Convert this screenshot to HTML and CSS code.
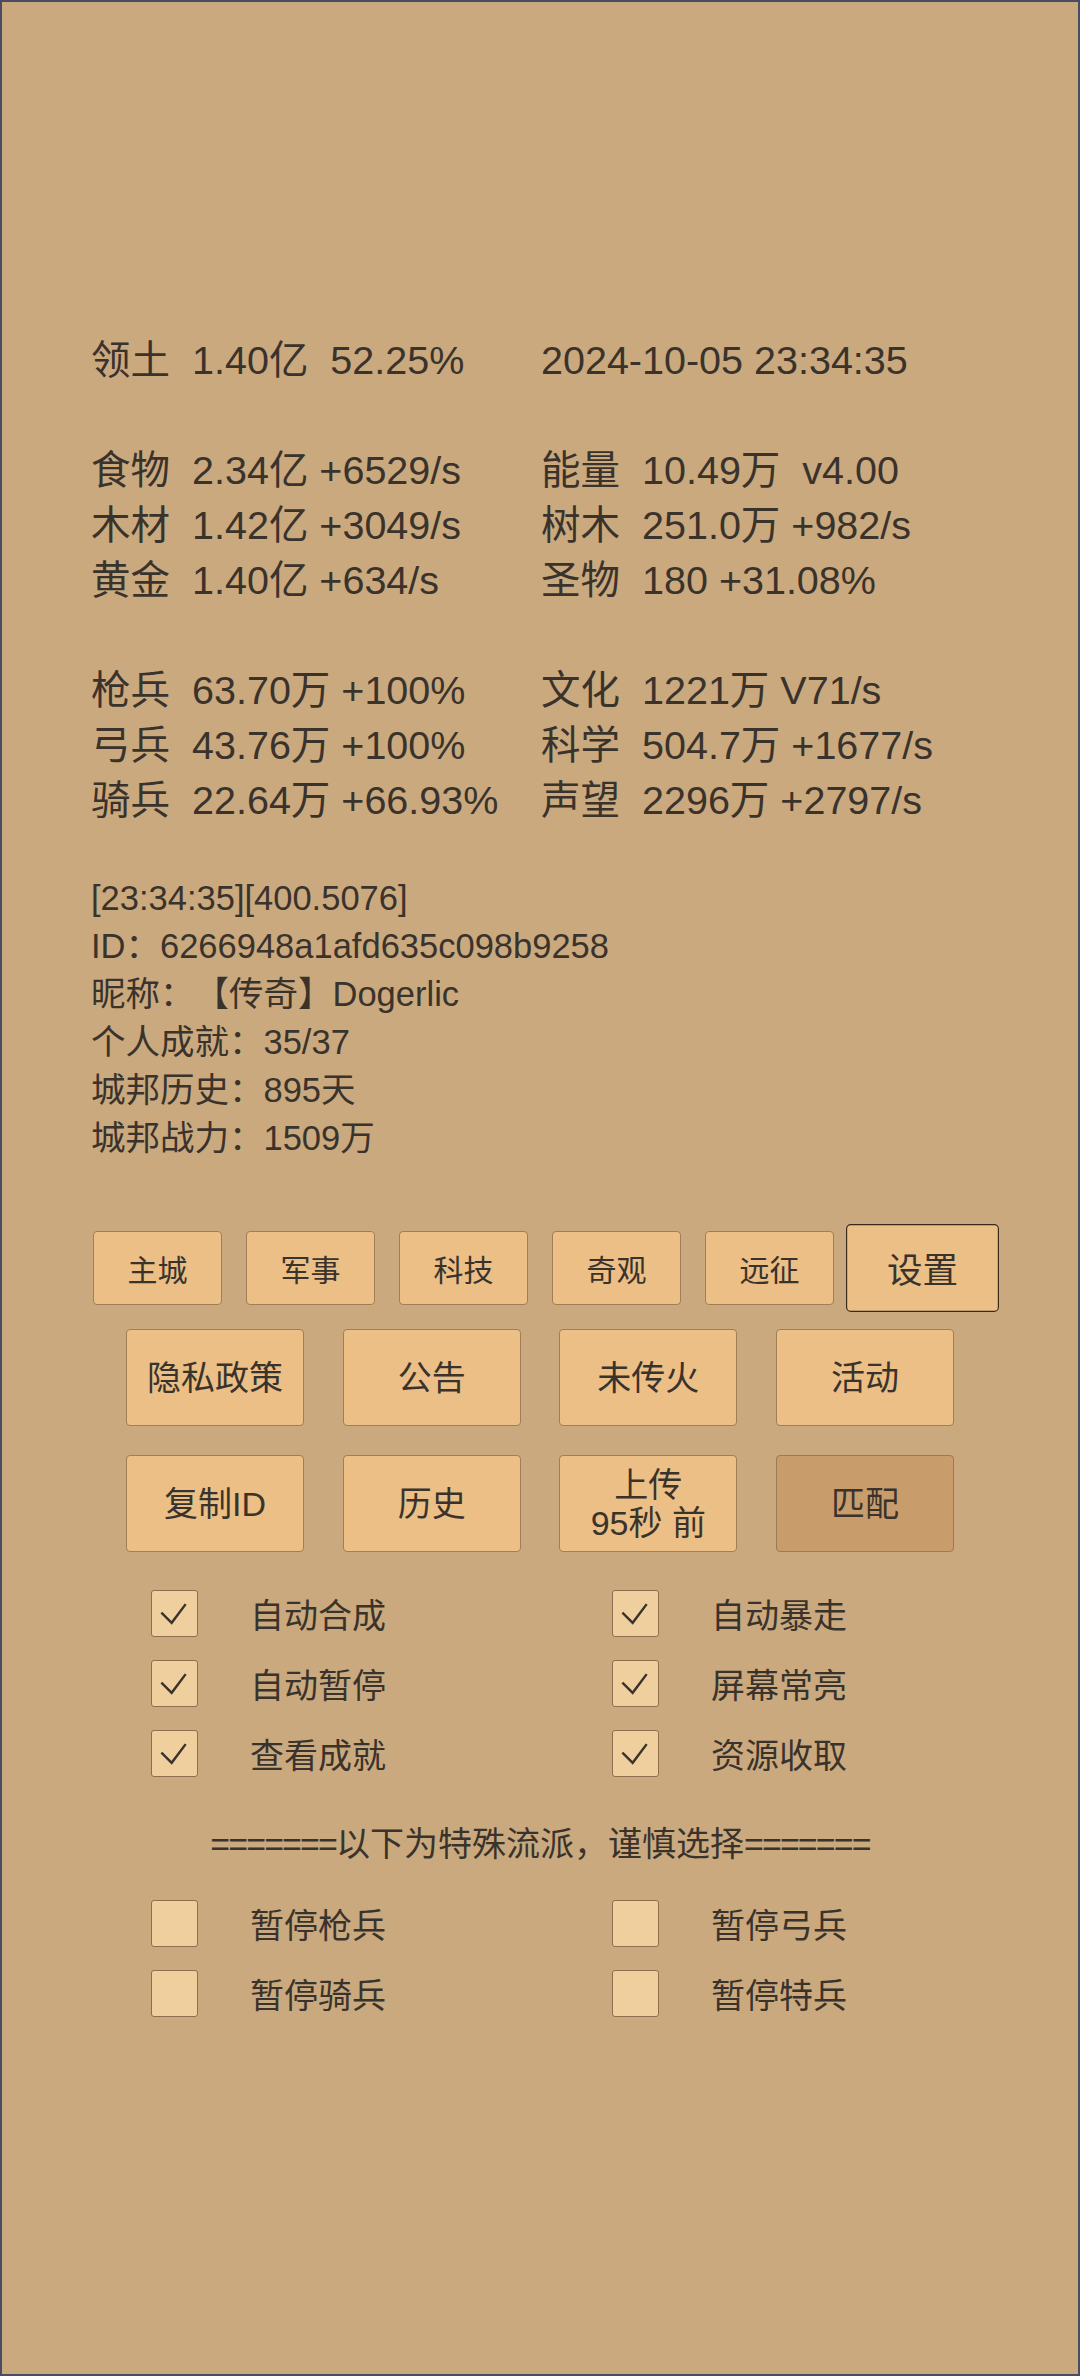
FILE: index.html
```html
<!DOCTYPE html>
<html lang="zh-CN">
<head>
    <meta charset="UTF-8">
    <meta name="viewport" content="width=device-width, initial-scale=1.0">
    <title>城邦</title>
    <link rel="stylesheet" href="styles.css">
</head>
<body>
    <div class="frame">
        <div class="stats">
            <div class="stat"><span class="label">领土</span>1.40亿  52.25%</div>
            <div class="stat">2024-10-05 23:34:35</div>
            <div class="blank"></div>
            <div class="blank"></div>
            <div class="stat"><span class="label">食物</span>2.34亿 +6529/s</div>
            <div class="stat"><span class="label">能量</span>10.49万  v4.00</div>
            <div class="stat"><span class="label">木材</span>1.42亿 +3049/s</div>
            <div class="stat"><span class="label">树木</span>251.0万 +982/s</div>
            <div class="stat"><span class="label">黄金</span>1.40亿 +634/s</div>
            <div class="stat"><span class="label">圣物</span>180 +31.08%</div>
            <div class="blank"></div>
            <div class="blank"></div>
            <div class="stat"><span class="label">枪兵</span>63.70万 +100%</div>
            <div class="stat"><span class="label">文化</span>1221万 V71/s</div>
            <div class="stat"><span class="label">弓兵</span>43.76万 +100%</div>
            <div class="stat"><span class="label">科学</span>504.7万 +1677/s</div>
            <div class="stat"><span class="label">骑兵</span>22.64万 +66.93%</div>
            <div class="stat"><span class="label">声望</span>2296万 +2797/s</div>
        </div>

        <div class="info">
            <div>[23:34:35][400.5076]</div>
            <div>ID：6266948a1afd635c098b9258</div>
            <div>昵称：【传奇】Dogerlic</div>
            <div>个人成就：35/37</div>
            <div>城邦历史：895天</div>
            <div>城邦战力：1509万</div>
        </div>

        <div class="tabs">
            <button class="tab">主城</button>
            <button class="tab">军事</button>
            <button class="tab">科技</button>
            <button class="tab">奇观</button>
            <button class="tab">远征</button>
            <button class="tab active">设置</button>
        </div>

        <div class="actions">
            <button class="action">隐私政策</button>
            <button class="action">公告</button>
            <button class="action">未传火</button>
            <button class="action">活动</button>
        </div>
        <div class="actions second">
            <button class="action">复制ID</button>
            <button class="action">历史</button>
            <button class="action small-lines">上传<br>95秒 前</button>
            <button class="action pressed">匹配</button>
        </div>

        <div class="options">
            <label class="option"><span class="box"><svg viewBox="0 0 47 47"><path d="M10 23 L21 34 L36 14"/></svg></span>自动合成</label>
            <label class="option"><span class="box"><svg viewBox="0 0 47 47"><path d="M10 23 L21 34 L36 14"/></svg></span>自动暴走</label>
            <label class="option"><span class="box"><svg viewBox="0 0 47 47"><path d="M10 23 L21 34 L36 14"/></svg></span>自动暂停</label>
            <label class="option"><span class="box"><svg viewBox="0 0 47 47"><path d="M10 23 L21 34 L36 14"/></svg></span>屏幕常亮</label>
            <label class="option"><span class="box"><svg viewBox="0 0 47 47"><path d="M10 23 L21 34 L36 14"/></svg></span>查看成就</label>
            <label class="option"><span class="box"><svg viewBox="0 0 47 47"><path d="M10 23 L21 34 L36 14"/></svg></span>资源收取</label>
        </div>

        <div class="divider"><span class="rule">=======</span>以下为特殊流派，谨慎选择<span class="rule">=======</span></div>

        <div class="options">
            <label class="option"><span class="box"></span>暂停枪兵</label>
            <label class="option"><span class="box"></span>暂停弓兵</label>
            <label class="option"><span class="box"></span>暂停骑兵</label>
            <label class="option"><span class="box"></span>暂停特兵</label>
        </div>
    </div>
</body>
</html>
```

FILE: styles.css
```css
* {
    margin: 0;
    padding: 0;
    box-sizing: border-box;
}

body {
    width: 1080px;
    height: 2376px;
    background: #caa97f;
    color: #3a332c;
    font-family: "Liberation Sans", "Noto Sans CJK SC", sans-serif;
    text-spacing-trim: space-all;
}

.frame {
    width: 1080px;
    height: 2376px;
    border: 2px solid #4a4c66;
    padding-top: 331px;
}

/* Resource table */
.stats {
    display: grid;
    grid-template-columns: 450px 450px;
    padding-left: 89px;
    font-size: 39.5px;
    line-height: 55px;
    white-space: pre;
}

.blank {
    height: 55px;
}

.label {
    display: inline-block;
    width: 101px;
}

/* Player info */
.info {
    margin-top: 46px;
    padding-left: 89px;
    font-size: 34.5px;
    line-height: 48px;
}

/* Buttons */
button {
    font-family: "Liberation Sans", "Noto Sans CJK SC", sans-serif;
    color: #3a332c;
    background: #ebbf86;
    border: 1.5px solid #a27d55;
    border-radius: 4px;
}

.tabs {
    display: flex;
    justify-content: center;
    gap: 24px;
    margin-top: 69px;
}

.tab {
    width: 129px;
    height: 74px;
    font-size: 30px;
}

.tab.active {
    transform: scale(1.186);
    border-color: #3a2a1a;
}

.actions {
    display: flex;
    justify-content: center;
    gap: 38.6px;
    margin-top: 24px;
}

.actions.second {
    margin-top: 29px;
}

.action {
    width: 178px;
    height: 97px;
    font-size: 34px;
    line-height: 40px;
}

.action.small-lines {
    line-height: 38px;
}

.action.pressed {
    background: #c99c6b;
    border-color: #9c7a55;
}

/* Option checkboxes */
.options {
    display: grid;
    grid-template-columns: 461px 461px;
    row-gap: 23px;
    padding-left: 149px;
    margin-top: 38px;
}

.option {
    display: flex;
    align-items: center;
    height: 47px;
    font-size: 34px;
}

.box {
    width: 47px;
    height: 47px;
    margin-right: 52px;
    background: #f0cf9f;
    border: 1.5px solid #8e6e4c;
    border-radius: 3px;
}

.box svg {
    display: block;
    width: 44px;
    height: 44px;
    fill: none;
    stroke: #3a332c;
    stroke-width: 2.6;
}

.divider {
    margin-top: 43px;
    text-align: center;
    font-size: 34px;
    line-height: 48px;
}

.rule {
    letter-spacing: -1.9px;
}

.divider + .options {
    margin-top: 32px;
}
```
